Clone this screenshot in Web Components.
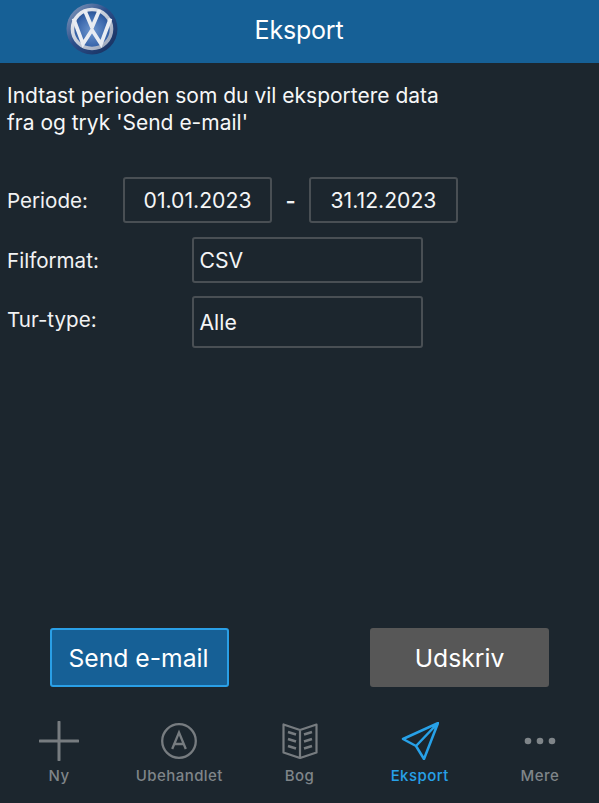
<!DOCTYPE html>
<html lang="da"><head><meta charset="utf-8"><title>Eksport</title>
<style>
html,body{margin:0;padding:0;background:#1c262e}
body{width:599px;height:803px;overflow:hidden;font-family:Inter,"Liberation Sans",sans-serif;color:#fff;display:flex;flex-direction:column}
export-form{flex:1}
</style></head><body>
<app-header title="Eksport"></app-header>
<export-form></export-form>
<action-bar></action-bar>
<tab-bar></tab-bar>
<script>
function el(name,html){customElements.define(name,class extends HTMLElement{constructor(){super();const s=this.attachShadow({mode:'open'});s.innerHTML=html;}
connectedCallback(){if(this._i)return;this._i=1;const t=this.shadowRoot.querySelector('[data-title]');if(t)t.textContent=this.getAttribute('title');}});}
el('app-header',`<style>:host{display:grid;height:63px;background:#166096;place-items:center;position:relative;flex:none}
span{font-size:25px;letter-spacing:-.2px;line-height:1;margin-top:-3px;margin-left:-1px}
svg{position:absolute;left:66px;top:3px}</style>
<svg width="52" height="52" viewBox="0 0 52 52"><defs>
<radialGradient id="b" cx=".5" cy=".55" r=".6"><stop offset="0" stop-color="#6f97cf"/><stop offset=".65" stop-color="#3a66ab"/><stop offset="1" stop-color="#1f4584"/></radialGradient>
<linearGradient id="r" x1="0" y1="0" x2="1" y2="1"><stop offset="0" stop-color="#f0f2f7"/><stop offset="1" stop-color="#98a3b8"/></linearGradient>
<linearGradient id="e" x1="0" y1="0" x2="1" y2="1"><stop offset="0" stop-color="#8ea2c2"/><stop offset=".45" stop-color="#2c4f8b"/><stop offset="1" stop-color="#142c58"/></linearGradient></defs>
<circle cx="26" cy="26" r="25.500" fill="url(#e)"/>
<circle cx="26" cy="26" r="19.500" fill="url(#b)" stroke="url(#r)" stroke-width="3.600"/>
<path d="M18.500 7 26 24.500 33.500 7M7.500 15.500 17 41 26 27l9 14 9.500-25.500" fill="none" stroke="#e9ecf2" stroke-width="3.700" stroke-linejoin="miter"/></svg>
<span data-title></span>`);
el('text-field',`<style>:host{display:flex;box-sizing:border-box;align-items:center;border:2px solid #494f54;border-radius:3px;font-size:21.200px;padding:0 5.500px;color:#f4f5f6}
:host([center]){justify-content:center;padding:0}</style><slot></slot>`);
el('form-row',`<style>:host{display:flex;align-items:center;font-size:20.600px;color:#f1f2f3}
.l{flex:none}</style><div class="l"><slot name="label"></slot></div><slot></slot>`);
el('export-form',`<style>:host{display:block;box-sizing:border-box;padding:19px 0 0 7px}
p{margin:0 0 41px;font-size:21px;line-height:27px;color:#f6f7f8}
form-row{margin-bottom:14px}
form-row.t{margin-bottom:13px}
text-field.d{width:149px;height:46px}
text-field.w{width:231px}
.dash{width:37px;text-align:center;font-size:22px;font-weight:600;flex:none;padding-top:2px}
</style>
<p>Indtast perioden som du vil eksportere data<br>fra og tryk 'Send e-mail'</p>
<form-row><span slot="label" style="display:block;width:116px">Periode:</span><text-field class="d" center>01.01.2023</text-field><span class="dash">-</span><text-field class="d" center>31.12.2023</text-field></form-row>
<form-row class="t"><span slot="label" style="display:block;width:185px">Filformat:</span><text-field class="w" style="height:46px">CSV</text-field></form-row>
<form-row><span slot="label" style="display:block;width:185px;margin-top:-5px">Tur-type:</span><text-field class="w" style="height:52px"><span>Alle</span></text-field></form-row>`);
el('action-btn',`<style>:host{display:grid;place-items:center;box-sizing:border-box;width:179px;height:59px;border-radius:3px;font-size:24.700px;background:#575757;color:#fff}
:host([primary]){background:#166096;border:2px solid #2a9fe6;padding-right:2px}</style><slot></slot>`);
el('action-bar',`<style>:host{display:flex;justify-content:space-between;padding:0 50px;flex:none;height:82px;}</style>
<action-btn primary>Send e-mail</action-btn><action-btn>Udskriv</action-btn>`);
el('tab-item',`<style>:host{flex:1;display:flex;flex-direction:column;align-items:center;color:#7f8589;font-size:15px;font-weight:500;letter-spacing:.45px}
:host([active]){color:#27a1e8}
.i{height:48px;display:flex;align-items:center;justify-content:center;margin-bottom:1px}
.t{line-height:20px}</style><div class="i"><slot name="icon"></slot></div><div class="t"><slot></slot></div>`);
el('tab-bar',`<style>:host{display:flex;flex:none;height:93px;box-sizing:border-box;padding:7px 0 0 0;margin:0 -1px 0 -1px}
svg{display:block;fill:none;stroke:currentColor}</style>
<tab-item><svg slot="icon" width="40" height="40" viewBox="0 0 40 40" stroke-width="3" stroke-linecap="round" style="stroke:#777c80;margin-left:-1px"><path d="M20 1v38M1 20h38"/></svg>Ny</tab-item>
<tab-item><svg slot="icon" width="36" height="36" viewBox="0 0 36 36" stroke-width="2.300" style="stroke:#777c80;margin-left:-1px"><circle cx="18" cy="18" r="16.800"/><path d="M11.200 26 18 9.500 24.800 26M13.400 21h9.200" stroke-width="2.300"/></svg>Ubehandlet</tab-item>
<tab-item><svg slot="icon" width="36" height="36" viewBox="0 0 36 36" stroke-width="2.200" stroke-linejoin="round" style="stroke:#777c80"><path d="M18 7 1.500 1.500v28L18 35l16.500-5.500v-28zM18 7v28"/><path d="M6 9l8 2.500M6 16l8 2.500M6 23l8 2.500M30 9l-8 2.500M30 16l-8 2.500M30 23l-8 2.500" stroke-width="2.500"/></svg>Bog</tab-item>
<tab-item active><svg slot="icon" width="38" height="38" viewBox="0 0 38 38" stroke-width="2.500" stroke-linejoin="round"><path d="M37 1 2 17l13 7 8 13zM37 1 15 24"/></svg>Eksport</tab-item>
<tab-item><svg slot="icon" width="32" height="8" viewBox="0 0 32 8" style="fill:#7f8589;stroke:none"><circle cx="4" cy="4" r="3.300"/><circle cx="16" cy="4" r="3.300"/><circle cx="28" cy="4" r="3.300"/></svg>Mere</tab-item>`);
</script>
</body></html>
